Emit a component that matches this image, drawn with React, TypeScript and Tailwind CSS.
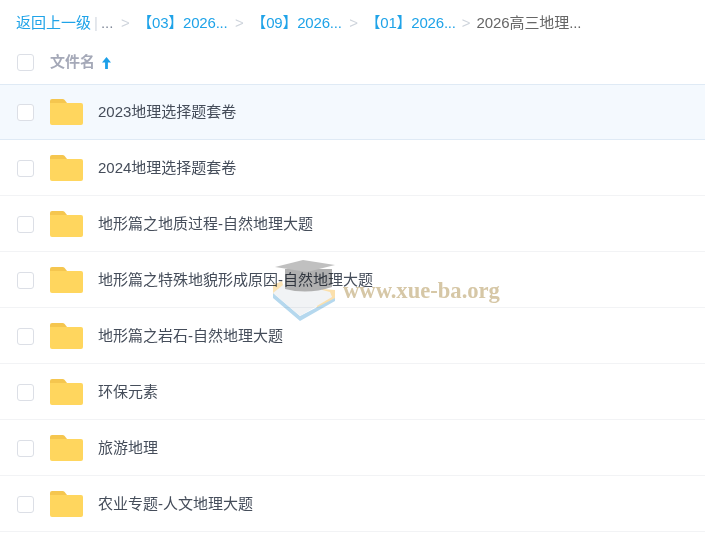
import { Fragment } from 'react';

const crumbs = ['【03】2026...', '【09】2026...', '【01】2026...'];

const folders = [
  '2023地理选择题套卷',
  '2024地理选择题套卷',
  '地形篇之地质过程-自然地理大题',
  '地形篇之特殊地貌形成原因-自然地理大题',
  '地形篇之岩石-自然地理大题',
  '环保元素',
  '旅游地理',
  '农业专题-人文地理大题',
];

function FolderIcon() {
  return (
    <svg width="33" height="26" viewBox="0 0 33 26" className="shrink-0 block">
      <path d="M0 2a2 2 0 0 1 2-2h10.500a3 3 0 0 1 2.200 1l2.300 3H0z" fill="#f5c64f" />
      <path d="M0 4h31a2 2 0 0 1 2 2V24a2 2 0 0 1-2 2H2a2 2 0 0 1-2-2z" fill="#ffd65e" />
    </svg>
  );
}

function Checkbox() {
  return <span className="block w-[17px] h-[17px] shrink-0 rounded-[3px] border border-[#dcdfe6] bg-white" />;
}

function Watermark() {
  return (
    <div className="absolute left-[272px] top-[259px] flex items-center pointer-events-none mix-blend-multiply">
      <svg width="64" height="64" viewBox="0 0 64 64" className="shrink-0">
        <path d="M1 26 L10 22 L12 30 L1 37z" fill="#fbe3b4" />
        <path d="M50 30 L63 31 L63 41 L44 50z" fill="#fbe0ac" />
        <path d="M1 34 L28 57 L63 39 L63 42 L28 62 L1 39z" fill="#b5d8ee" />
        <path d="M1 34 L16 22 L58 33 L60 38 L28 57z" fill="#f1f3f5" />
        <path d="M13 10 L13 30 Q36 36 60 28 L60 10z" fill="#b0b0b0" />
        <path d="M3 8 L31 1 L63 6 L35 13z" fill="#c0c0c0" />
      </svg>
      <span className="ml-[7px] mt-[1px] font-['Liberation_Serif',serif] font-bold text-[22.6px] leading-none text-[#d6c7a6] whitespace-nowrap">
        www.xue-ba.org
      </span>
    </div>
  );
}

export default function App() {
  return (
    <div className="relative w-[705px] h-[547px] overflow-hidden bg-white font-['Liberation_Sans','Noto_Sans_CJK_SC',sans-serif]">
      <div className="flex items-center h-[44px] pl-4 text-[15px] leading-none text-[#1fa3e8]">
        <span>返回上一级</span>
        <span className="mx-[3px] text-[#d5dbe3]">|</span>
        <span className="text-[#818999]">...</span>
        {crumbs.map((c) => (
          <Fragment key={c}>
            <span className="mx-[7.500px] text-[#ced4dc]">&gt;</span>
            <span className="tracking-[-0.200px]">{c}</span>
          </Fragment>
        ))}
        <span className="mx-[6px] text-[#ced4dc]">&gt;</span>
        <span className="text-[#666666] tracking-[-0.100px]">2026高三地理...</span>
      </div>

      <div className="flex items-center h-[40px] pb-[3px] pl-[17px]">
        <Checkbox />
        <span className="ml-[16px] text-[15px] font-bold text-[#a5a9b8]">文件名</span>
        <svg width="9" height="12" viewBox="0 0 9 12" className="ml-[7px]">
          <path d="M4.500 0 L9 5.500 H5.900 V12 H3.100 V5.500 H0z" fill="#1b9fe8" />
        </svg>
      </div>

      {folders.map((name, i) => (
        <div
          key={name}
          className={
            i === 0
              ? 'flex items-center h-[56px] pl-[17px] border-y border-[#dfeaf5] bg-[#f4f9fe]'
              : 'flex items-center h-[56px] pt-px pl-[17px] border-b border-[#f2f3f5]'
          }
        >
          <Checkbox />
          <span className="ml-[16px]"><FolderIcon /></span>
          <span className="ml-[15px] text-[15px] text-[#454d5a]">{name}</span>
        </div>
      ))}

      <Watermark />
    </div>
  );
}
